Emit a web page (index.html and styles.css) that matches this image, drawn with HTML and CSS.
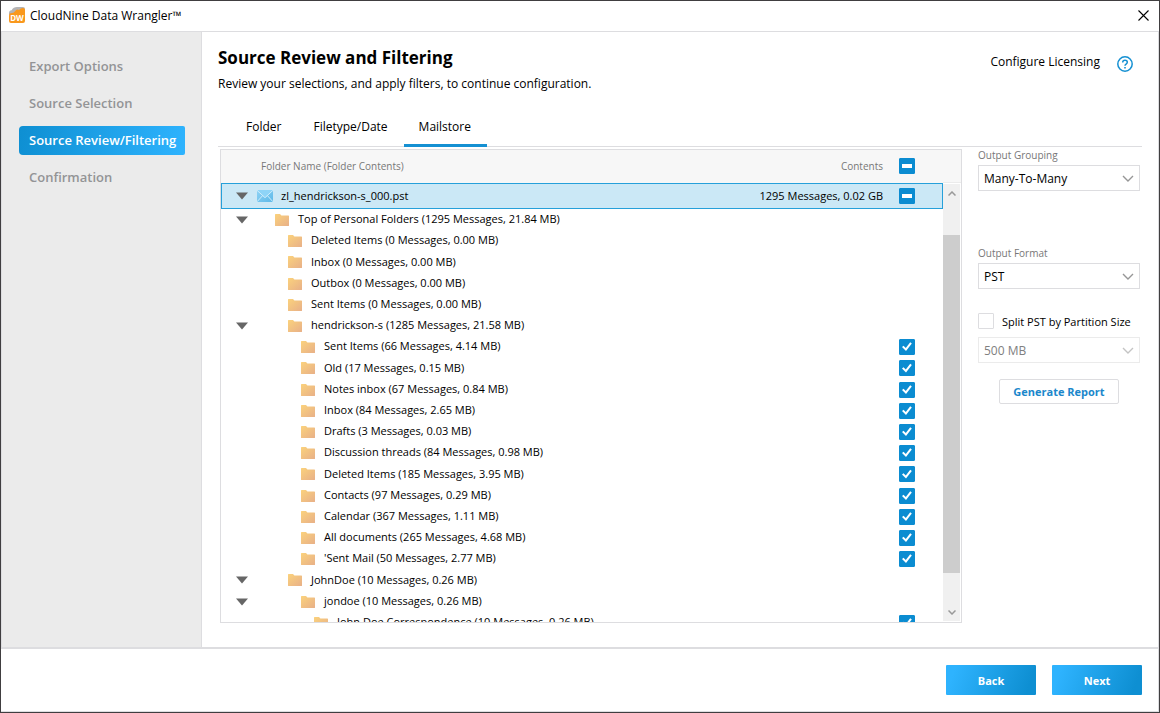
FILE: index.html
```
<!DOCTYPE html>
<html lang="en">
<head>
<meta charset="utf-8">
<title>CloudNine Data Wrangler</title>
<link rel="stylesheet" href="styles.css">
</head>
<body>
<svg class="defs" aria-hidden="true">
  <defs>
    <linearGradient id="folderFill" x1="0" y1="0" x2="1" y2="1">
      <stop offset="0" stop-color="#fbd27c"/><stop offset="1" stop-color="#e8b088"/>
    </linearGradient>
    <linearGradient id="mailFill" x1="0" y1="0" x2="1" y2="1">
      <stop offset="0" stop-color="#8fd3f5"/><stop offset="1" stop-color="#5db9e8"/>
    </linearGradient>
    <symbol id="folder" viewBox="0 0 14 12">
      <path d="M0 .6Q0 0 .6 0H5L6.4 1.5H13.4Q14 1.5 14 2.1V11.4Q14 12 13.4 12H.6Q0 12 0 11.4Z" fill="url(#folderFill)"/>
    </symbol>
    <symbol id="mail" viewBox="0 0 16 12">
      <rect width="16" height="12" fill="url(#mailFill)"/>
      <path d="M0 0H16L8 7.5Z" fill="#8ed4f7"/>
      <path d="M0 .3L8 7.7L16 .3M0 11.8L5.6 5.6M16 11.8L10.4 5.6" fill="none" stroke="#d8f0fc" stroke-width=".9"/>
    </symbol>
    <symbol id="arrow" viewBox="0 0 12 8"><path d="M0 .5H12L6 7.5Z" fill="#666"/></symbol>
  </defs>
</svg>
<div class="window">
  <header class="titlebar">
    <svg class="logo" viewBox="0 0 16 16" aria-hidden="true">
      <path d="M0 13V6Q0 3.4 2.6 3.2Q4.4 0 8 0H14Q16 0 16 2V8H0Z" fill="#b4b4b6"/>
      <path d="M0 14V8.4Q.2 6 2.6 6Q4.6 6 5.8 4.4Q7.6 1.8 10 3Q12.6 .2 15 1.2Q16 1.8 16 3V14Q16 16 14 16H2Q0 16 0 14Z" fill="#f9981d"/>
      <text x="8" y="14" text-anchor="middle" class="logo-text">DW</text>
    </svg>
    <span class="app-name">CloudNine Data Wrangler™</span>
    <button class="close" type="button" aria-label="Close"><svg viewBox="0 0 11 11"><path d="M.5 .5L10.5 10.5M10.5 .5L.5 10.5" stroke="#000" stroke-width="1.1"/></svg></button>
  </header>
  <div class="body">
    <nav class="sidebar">
      <a href="#export">Export Options</a>
      <a href="#source">Source Selection</a>
      <a href="#review" class="current" aria-current="step">Source Review/Filtering</a>
      <a href="#confirm">Confirmation</a>
    </nav>
    <main class="main">
      <div class="heading">
        <div class="heading-text">
          <h1>Source Review and Filtering</h1>
          <p>Review your selections, and apply filters, to continue configuration.</p>
        </div>
        <a class="licensing" href="#licensing">Configure Licensing</a>
        <button class="help" type="button" aria-label="Help"><svg viewBox="0 0 16 16" fill="none" stroke="#1590d2"><circle cx="8" cy="8" r="7.2" stroke-width="1.5"/><path d="M5.7 6.5Q5.7 4.3 8 4.3Q10.3 4.3 10.3 6.3Q10.3 7.3 9.1 8.1Q8 8.8 8 9.8" stroke-width="1.5"/><path d="M8 10.9V12.5" stroke-width="1.6"/></svg></button>
      </div>
      <div class="tabs" role="tablist">
        <button type="button" role="tab">Folder</button>
        <button type="button" role="tab">Filetype/Date</button>
        <button type="button" role="tab" aria-selected="true" class="active">Mailstore</button>
      </div>
      <div class="content">
        <section class="panel">
          <div class="table-clip">
            <table>
              <thead>
                <tr><th class="name" scope="col">Folder Name (Folder Contents)</th><th class="size" scope="col">Contents</th><th class="pick"><input type="checkbox" class="box partial" aria-label="Select all"></th></tr>
              </thead>
              <tbody id="rows">
                <tr class="selected"><td><div class="item"><svg class="arrow"><use href="#arrow"/></svg><svg class="mail"><use href="#mail"/></svg><span>zl_hendrickson-s_000.pst</span></div></td><td class="size">1295 Messages, 0.02 GB</td><td class="pick"><input type="checkbox" class="box partial" aria-label="zl_hendrickson-s_000.pst"></td></tr>
                <tr><td colspan="2"><div class="item"><svg class="arrow"><use href="#arrow"/></svg><svg class="folder l1"><use href="#folder"/></svg><span>Top of Personal Folders (1295 Messages, 21.84 MB)</span></div></td><td></td></tr>
                <tr><td colspan="2"><div class="item"><i class="arrow"></i><svg class="folder l2"><use href="#folder"/></svg><span>Deleted Items (0 Messages, 0.00 MB)</span></div></td><td></td></tr>
                <tr><td colspan="2"><div class="item"><i class="arrow"></i><svg class="folder l2"><use href="#folder"/></svg><span>Inbox (0 Messages, 0.00 MB)</span></div></td><td></td></tr>
                <tr><td colspan="2"><div class="item"><i class="arrow"></i><svg class="folder l2"><use href="#folder"/></svg><span>Outbox (0 Messages, 0.00 MB)</span></div></td><td></td></tr>
                <tr><td colspan="2"><div class="item"><i class="arrow"></i><svg class="folder l2"><use href="#folder"/></svg><span>Sent Items (0 Messages, 0.00 MB)</span></div></td><td></td></tr>
                <tr><td colspan="2"><div class="item"><svg class="arrow"><use href="#arrow"/></svg><svg class="folder l2"><use href="#folder"/></svg><span>hendrickson-s (1285 Messages, 21.58 MB)</span></div></td><td></td></tr>
                <tr><td colspan="2"><div class="item"><i class="arrow"></i><svg class="folder l3"><use href="#folder"/></svg><label for="c1">Sent Items (66 Messages, 4.14 MB)</label></div></td><td class="pick"><input type="checkbox" class="box" id="c1" checked></td></tr>
                <tr><td colspan="2"><div class="item"><i class="arrow"></i><svg class="folder l3"><use href="#folder"/></svg><label for="c2">Old (17 Messages, 0.15 MB)</label></div></td><td class="pick"><input type="checkbox" class="box" id="c2" checked></td></tr>
                <tr><td colspan="2"><div class="item"><i class="arrow"></i><svg class="folder l3"><use href="#folder"/></svg><label for="c3">Notes inbox (67 Messages, 0.84 MB)</label></div></td><td class="pick"><input type="checkbox" class="box" id="c3" checked></td></tr>
                <tr><td colspan="2"><div class="item"><i class="arrow"></i><svg class="folder l3"><use href="#folder"/></svg><label for="c4">Inbox (84 Messages, 2.65 MB)</label></div></td><td class="pick"><input type="checkbox" class="box" id="c4" checked></td></tr>
                <tr><td colspan="2"><div class="item"><i class="arrow"></i><svg class="folder l3"><use href="#folder"/></svg><label for="c5">Drafts (3 Messages, 0.03 MB)</label></div></td><td class="pick"><input type="checkbox" class="box" id="c5" checked></td></tr>
                <tr><td colspan="2"><div class="item"><i class="arrow"></i><svg class="folder l3"><use href="#folder"/></svg><label for="c6">Discussion threads (84 Messages, 0.98 MB)</label></div></td><td class="pick"><input type="checkbox" class="box" id="c6" checked></td></tr>
                <tr><td colspan="2"><div class="item"><i class="arrow"></i><svg class="folder l3"><use href="#folder"/></svg><label for="c7">Deleted Items (185 Messages, 3.95 MB)</label></div></td><td class="pick"><input type="checkbox" class="box" id="c7" checked></td></tr>
                <tr><td colspan="2"><div class="item"><i class="arrow"></i><svg class="folder l3"><use href="#folder"/></svg><label for="c8">Contacts (97 Messages, 0.29 MB)</label></div></td><td class="pick"><input type="checkbox" class="box" id="c8" checked></td></tr>
                <tr><td colspan="2"><div class="item"><i class="arrow"></i><svg class="folder l3"><use href="#folder"/></svg><label for="c9">Calendar (367 Messages, 1.11 MB)</label></div></td><td class="pick"><input type="checkbox" class="box" id="c9" checked></td></tr>
                <tr><td colspan="2"><div class="item"><i class="arrow"></i><svg class="folder l3"><use href="#folder"/></svg><label for="c10">All documents (265 Messages, 4.68 MB)</label></div></td><td class="pick"><input type="checkbox" class="box" id="c10" checked></td></tr>
                <tr><td colspan="2"><div class="item"><i class="arrow"></i><svg class="folder l3"><use href="#folder"/></svg><label for="c11">'Sent Mail (50 Messages, 2.77 MB)</label></div></td><td class="pick"><input type="checkbox" class="box" id="c11" checked></td></tr>
                <tr><td colspan="2"><div class="item"><svg class="arrow"><use href="#arrow"/></svg><svg class="folder l2"><use href="#folder"/></svg><span>JohnDoe (10 Messages, 0.26 MB)</span></div></td><td></td></tr>
                <tr><td colspan="2"><div class="item"><svg class="arrow"><use href="#arrow"/></svg><svg class="folder l3"><use href="#folder"/></svg><span>jondoe (10 Messages, 0.26 MB)</span></div></td><td></td></tr>
                <tr><td colspan="2"><div class="item"><i class="arrow"></i><svg class="folder l4"><use href="#folder"/></svg><label for="c12">John Doe Correspondence (10 Messages, 0.26 MB)</label></div></td><td class="pick"><input type="checkbox" class="box" id="c12" checked></td></tr>
              </tbody>
            </table>
          </div>
          <div class="scroll-side">
            <div class="scroll-head"></div>
            <div class="scrollbar">
              <svg viewBox="0 0 8 5"><path d="M.5 4.5L4 1L7.5 4.5"/></svg>
              <div class="track"><div class="thumb"></div></div>
              <svg viewBox="0 0 8 5"><path d="M.5 .5L4 4L7.5 .5"/></svg>
            </div>
          </div>
        </section>
        <aside class="options">
          <label class="caption" for="grouping">Output Grouping</label>
          <div class="select"><select id="grouping"><option>Many-To-Many</option></select><svg viewBox="0 0 12 7"><path d="M1 1L6 6L11 1"/></svg></div>
          <label class="caption format" for="format">Output Format</label>
          <div class="select"><select id="format"><option>PST</option></select><svg viewBox="0 0 12 7"><path d="M1 1L6 6L11 1"/></svg></div>
          <div class="split"><input type="checkbox" class="box" id="split"><label for="split">Split PST by Partition Size</label></div>
          <div class="select off"><select aria-label="Partition size" disabled><option>500 MB</option></select><svg viewBox="0 0 12 7"><path d="M1 1L6 6L11 1"/></svg></div>
          <button class="report" type="button">Generate Report</button>
        </aside>
      </div>
    </main>
  </div>
  <footer class="footer">
    <button type="button">Back</button>
    <button type="button">Next</button>
  </footer>
</div>
</body>
</html>
```
FILE: styles.css
```
* { box-sizing: border-box; }
body {
  margin: 0;
  font-family: "Open Sans", "Noto Sans", sans-serif;
  font-size: 11px;
  font-weight: 400;
  color: #000;
  background: #fff;
}
button, select, input { font: inherit; color: inherit; margin: 0; }
button { padding: 0; border: 0; background: none; }
a { color: inherit; text-decoration: none; }
svg { display: block; flex: none; }
.defs { position: absolute; width: 0; height: 0; }

.window {
  display: flex;
  flex-direction: column;
  height: 100vh;
  border: 1px solid #403e40;
}
.titlebar {
  display: flex;
  align-items: center;
  height: 31px;
  padding: 0 10px 2px 8px;
  border-bottom: 1px solid #dddde0;
}
.logo { width: 16px; height: 16px; }
.logo-text { font-size: 8px; font-weight: 700; fill: #fff; }
.app-name { flex: 1; margin-left: 5px; font-size: 12px; font-weight: 400; }
.close svg { width: 11px; height: 11px; }

.body {
  display: flex;
  flex: 1;
  min-height: 0;
  border: solid #dddde0;
  border-width: 0 1px;
}
.sidebar {
  display: flex;
  flex-direction: column;
  gap: 8px;
  width: 200px;
  padding: 20px 16px 0 17px;
  background: #ebebeb;
  border-right: 1px solid #dddde0;
}
.sidebar a {
  padding: 0 6px 0 10px;
  font-size: 13px;
  font-weight: 600;
  line-height: 29px;
  white-space: nowrap;
  color: #939496;
}
.sidebar .current {
  color: #fff;
  border-radius: 4px 2px 2px 4px;
  background: linear-gradient(100deg, #0e8fd2, #2eb3fe);
}

.main {
  display: flex;
  flex: 1;
  flex-direction: column;
  min-width: 0;
  padding: 14px 16px 24px;
}
.heading { display: flex; align-items: flex-start; padding-right: 9px; }
.heading-text { flex: 1; }
h1 { margin: 0; font-size: 17px; font-weight: 700; line-height: 24px; }
p { margin: 4px 0 0; font-size: 12px; font-weight: 400; line-height: 20px; }
.licensing { margin-top: 6px; font-size: 12px; font-weight: 400; line-height: 20px; }
.help { margin: 10px 0 0 17px; }
.help svg { width: 16px; height: 16px; }

.tabs {
  display: flex;
  margin-top: 13px;
  padding-left: 12px;
  border-bottom: 1px solid #dddde0;
}
.tabs button {
  height: 40px;
  margin-bottom: -1px;
  padding: 2px 16px 0;
  font-size: 12px;
  font-weight: 500;
  border-bottom: 3px solid transparent;
}
.tabs .active { padding: 2px 16px 0 15px; border-color: #1590d2; }

.content {
  display: flex;
  flex: 1;
  gap: 16px;
  min-height: 0;
  padding: 2px 2px 0;
}
.panel {
  display: flex;
  flex: 1;
  min-width: 0;
  border: 1px solid #dddde0;
}
.table-clip { flex: 1; overflow: hidden; }
table { width: 100%; border-collapse: collapse; }
th {
  height: 33px;
  padding: 0;
  font-size: 10px;
  font-weight: 500;
  text-align: left;
  color: #777;
  background: #f7f7f7;
  border-bottom: 1px solid #ebebeb;
}
th.name { padding-left: 40px; }
th.size, td.size { width: 160px; padding-right: 16px; text-align: right; white-space: nowrap; }
.pick { width: 44px; }
td { height: 21px; padding: 0; line-height: 16px; }
tr:nth-child(5n+4) td { height: 22px; }
.selected td { height: 26px; }
.selected {
  background: #cbe8f6;
  outline: 1px solid #26a0da;
  outline-offset: -1px;
}
.item { display: flex; align-items: center; padding-left: 15px; white-space: nowrap; }
.item span, .item label { padding-bottom: 1px; }
.arrow { width: 12px; height: 8px; }
.mail { width: 16px; height: 12px; margin: 0 8px 0 9px; }
.folder { width: 14px; height: 12px; margin-right: 9px; }
.l1 { margin-left: 27px; }
.l2 { margin-left: 40px; }
.l3 { margin-left: 53px; }
.l4 { margin-left: 66px; }

.box {
  display: block;
  position: relative;
  appearance: none;
  width: 16px;
  height: 16px;
  border: 1px solid #dddde0;
  border-radius: 1px;
  background: #fff;
}
.box:checked, .box.partial { border-color: #0b8cd1; background: #0b8cd1; }
.box:checked::before, .box.partial::before {
  content: "";
  position: absolute;
  inset: 2px;
  background: #fff;
}
.box:checked::before { clip-path: polygon(0 55%, 15% 42%, 38% 65%, 82% 8%, 98% 20%, 40% 96%); }
.box.partial::before { inset: 5px 2px; }

.scroll-side { display: flex; flex-direction: column; width: 18px; }
.scroll-head { height: 33px; background: #f7f7f7; border-bottom: 1px solid #ebebeb; }
.scrollbar {
  display: flex;
  flex: 1;
  flex-direction: column;
  align-items: center;
  gap: 8px;
  margin: 1px 1px 1px 0;
  padding: 7px 0 6px;
  background: #f0f0f0;
}
.scrollbar svg { width: 8px; height: 5px; fill: none; stroke: #999; stroke-width: 1.5; }
.track { flex: 1; width: 100%; padding-top: 31px; }
.thumb { height: 92%; background: #cdcdcd; }

.options { display: flex; flex-direction: column; width: 162px; font-weight: 500; }
.caption { font-size: 10px; line-height: 12px; margin-bottom: 4px; color: #777; }
.format { margin-top: 56px; }
.select { position: relative; }
.select select {
  display: block;
  appearance: none;
  width: 100%;
  height: 26px;
  padding: 0 5px;
  font-size: 12px;
  border: 1px solid #dddde0;
  border-radius: 0;
  background: #fff;
  opacity: 1;
}
.select svg {
  position: absolute;
  right: 6px;
  top: 10px;
  width: 12px;
  height: 7px;
  fill: none;
  stroke: #969696;
  stroke-width: 1.4;
  pointer-events: none;
}
.select.off select { color: #808080; border-color: #ebebeb; font-weight: 400; }
.select.off svg { stroke: #c4c4c4; }
.split { display: flex; align-items: center; gap: 8px; margin: 24px 0 8px; white-space: nowrap; }
.report {
  align-self: center;
  width: 120px;
  height: 25px;
  margin-top: 16px;
  font-size: 11px;
  font-weight: 700;
  color: #1b87cb;
  border: 1px solid #dddde0;
  border-radius: 2px;
}

.footer {
  display: flex;
  justify-content: flex-end;
  gap: 16px;
  padding: 16px;
  border: solid #dddde0;
  border-width: 2px 1px 1px 0;
}
.footer button {
  width: 90px;
  height: 30px;
  font-size: 11px;
  font-weight: 700;
  color: #fff;
  border-radius: 1px;
  background: linear-gradient(110deg, #2eb3fe 10%, #0e8fd2 90%);
}
```
